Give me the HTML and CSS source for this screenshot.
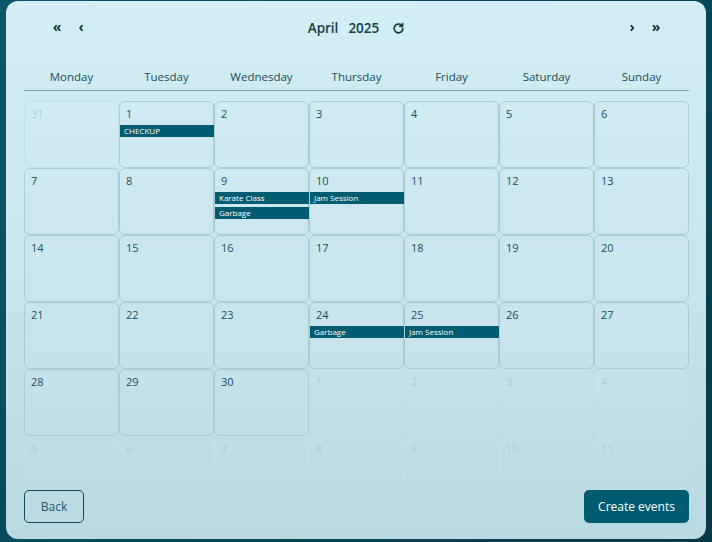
FILE: index.html
```html
<!DOCTYPE html>
<html lang="en">
<head>
<meta charset="utf-8">
<title>Calendar</title>
<link rel="stylesheet" href="styles.css">
</head>
<body>
<div class="card">
  <div class="nav">
    <div class="nav-side nav-left">
      <span class="nav-btn">&laquo;</span>
      <span class="nav-btn">&lsaquo;</span>
    </div>
    <div class="title">
      <span>April</span><span>2025</span>
      <svg class="refresh" width="13" height="13" viewBox="0 0 24 24" fill="none" stroke="#123a47" stroke-width="3.2" stroke-linecap="round" stroke-linejoin="round"><path d="M20 12a8 8 0 1 1-2.6-5.9"/><path d="M19.5 3v5h-5"/></svg>
    </div>
    <div class="nav-side nav-right">
      <span class="nav-btn">&rsaquo;</span>
      <span class="nav-btn">&raquo;</span>
    </div>
  </div>
  <div class="weekdays">
    <div>Monday</div><div>Tuesday</div><div>Wednesday</div><div>Thursday</div><div>Friday</div><div>Saturday</div><div>Sunday</div>
  </div>
  <div class="grid-wrap">
    <div class="grid">
      <div class="cell other"><span class="num">31</span></div>
      <div class="cell"><span class="num">1</span><div class="event">CHECKUP</div></div>
      <div class="cell"><span class="num">2</span></div>
      <div class="cell"><span class="num">3</span></div>
      <div class="cell"><span class="num">4</span></div>
      <div class="cell"><span class="num">5</span></div>
      <div class="cell"><span class="num">6</span></div>

      <div class="cell"><span class="num">7</span></div>
      <div class="cell"><span class="num">8</span></div>
      <div class="cell"><span class="num">9</span><div class="event">Karate Class</div><div class="event">Garbage</div></div>
      <div class="cell"><span class="num">10</span><div class="event">Jam Session</div></div>
      <div class="cell"><span class="num">11</span></div>
      <div class="cell"><span class="num">12</span></div>
      <div class="cell"><span class="num">13</span></div>

      <div class="cell"><span class="num">14</span></div>
      <div class="cell"><span class="num">15</span></div>
      <div class="cell"><span class="num">16</span></div>
      <div class="cell"><span class="num">17</span></div>
      <div class="cell"><span class="num">18</span></div>
      <div class="cell"><span class="num">19</span></div>
      <div class="cell"><span class="num">20</span></div>

      <div class="cell"><span class="num">21</span></div>
      <div class="cell"><span class="num">22</span></div>
      <div class="cell"><span class="num">23</span></div>
      <div class="cell"><span class="num">24</span><div class="event">Garbage</div></div>
      <div class="cell"><span class="num">25</span><div class="event">Jam Session</div></div>
      <div class="cell"><span class="num">26</span></div>
      <div class="cell"><span class="num">27</span></div>

      <div class="cell"><span class="num">28</span></div>
      <div class="cell"><span class="num">29</span></div>
      <div class="cell"><span class="num">30</span></div>
      <div class="cell other"><span class="num">1</span></div>
      <div class="cell other"><span class="num">2</span></div>
      <div class="cell other"><span class="num">3</span></div>
      <div class="cell other"><span class="num">4</span></div>

      <div class="cell other"><span class="num">5</span></div>
      <div class="cell other"><span class="num">6</span></div>
      <div class="cell other"><span class="num">7</span></div>
      <div class="cell other"><span class="num">8</span></div>
      <div class="cell other"><span class="num">9</span></div>
      <div class="cell other"><span class="num">10</span></div>
      <div class="cell other"><span class="num">11</span></div>
    </div>
  </div>
  <div class="footer">
    <button class="btn btn-outline">Back</button>
    <button class="btn btn-solid">Create events</button>
  </div>
</div>
</body>
</html>
```
FILE: styles.css
```css
html, body {
  margin: 0;
  padding: 0;
}
body {
  width: 712px;
  height: 542px;
  background: linear-gradient(135deg, #0b5669 0%, #08475a 60%, #063846 100%);
  font-family: "Open Sans", "Noto Sans", sans-serif;
  overflow: hidden;
}
.card {
  box-sizing: border-box;
  margin: 1px 6px 0 6px;
  width: 700px;
  height: 538px;
  border-radius: 12px;
  background: linear-gradient(180deg, #d3eef4 0%, #c8e6ec 50%, #b9dae0 100%);
  padding: 0 17px 0 18px;
  display: flex;
  flex-direction: column;
}
.nav {
  height: 54px;
  display: grid;
  grid-template-columns: 1fr auto 1fr;
  align-items: center;
}
.nav-side {
  display: flex;
  gap: 14px;
  align-items: center;
}
.nav-left { padding-left: 28px; }
.nav-right { justify-content: flex-end; padding-right: 28px; }
.nav-btn {
  font-size: 14px;
  font-weight: 700;
  color: #14323c;
  line-height: 1;
  width: 10px;
  text-align: center;
  position: relative;
  top: -1px;
}
.title {
  display: flex;
  align-items: center;
  gap: 10px;
  font-size: 13.5px;
  font-weight: 600;
  color: #143b48;
}
.refresh {
  margin-left: 3px;
}
.weekdays {
  display: grid;
  grid-template-columns: repeat(7, 1fr);
  height: 27px;
  margin-top: 8px;
  align-items: center;
  border-bottom: 1.5px solid #7eaab5;
  font-size: 11.5px;
  font-weight: 500;
  color: #1c4d5b;
  text-align: center;
}
.grid-wrap {
  margin-top: 10px;
  height: 383px;
  overflow: hidden;
}
.grid {
  display: grid;
  grid-template-columns: repeat(7, 95px);
  grid-auto-rows: 67px;
}
.cell {
  box-sizing: border-box;
  border: 1px solid #a9cdd5;
  border-radius: 6px;
  padding-top: 4px;
  display: flex;
  flex-direction: column;
  gap: 3px;
  background: rgba(255, 255, 255, 0.04);
}
.num {
  font-size: 11px;
  line-height: 16px;
  color: #204e5b;
  padding-left: 6px;
}
.cell.other {
  border-color: #c2e0e6;
}
.cell.other .num {
  color: #a9cfd8;
}
.event {
  margin: 0 -1px 0 0;
  height: 12px;
  line-height: 12px;
  background: #025c71;
  color: #ffffff;
  font-size: 8px;
  font-weight: 500;
  padding-left: 4px;
  white-space: nowrap;
  overflow: hidden;
}
.footer {
  margin-top: 6px;
  display: flex;
  justify-content: space-between;
  align-items: center;
}
.btn {
  font-family: "Open Sans", "Noto Sans", sans-serif;
  font-size: 12px;
  height: 33px;
  border-radius: 5px;
  cursor: pointer;
}
.btn-outline {
  width: 60px;
  background: transparent;
  border: 1.5px solid #0e4a59;
  color: #1e5565;
}
.btn-solid {
  width: 105px;
  background: #025c71;
  border: none;
  color: #ffffff;
}
```
